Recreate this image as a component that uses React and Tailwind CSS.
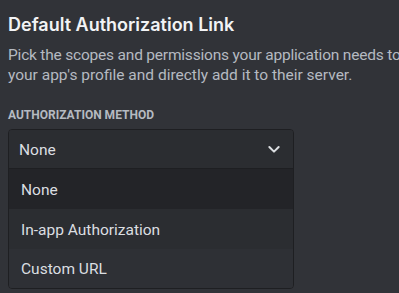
export default function App() {
  return (
    <div className="w-[399px] h-[293px] overflow-hidden bg-[#313338] pl-2 pt-[13px]" style={{ fontFamily: 'Roboto, "Noto Sans", sans-serif' }}>
      <h2 className="text-[18px] leading-[24px] font-semibold text-[#f2f3f5] whitespace-nowrap" style={{ fontFamily: 'Inter, sans-serif' }}>Default Authorization Link</h2>
      <div className="mt-[8px] text-[15.5px] leading-[20px] text-[#b5bac1] whitespace-nowrap">
        <div className="tracking-[-0.2px]">Pick the scopes and permissions your application needs to</div>
        <div>your app's profile and directly add it to their server.</div>
      </div>
      <div className="mt-[22px] text-[12px] leading-[16px] font-bold uppercase text-[#b5bac1]">Authorization Method</div>
      <div className="mt-[6px] w-[286px] rounded-[4px] border border-[#1e1f22] overflow-hidden">
        <div className="h-[38px] flex items-center justify-between bg-[#2b2d31] pl-[10px] pr-[11px]">
          <span className="pt-[3px] text-[15.5px] text-[#dbdee1]">None</span>
          <svg width="16" height="16" viewBox="0 0 24 24" fill="none"><path d="M5 9l7 7 7-7" stroke="#dbdee1" strokeWidth="3" strokeLinecap="round" strokeLinejoin="round" /></svg>
        </div>
        <div className="border-t border-[#1e1f22]">
          <div className="h-[40px] flex items-center px-[12px] pt-[3px] bg-[#232428] text-[15.5px] text-[#dbdee1]">None</div>
          <div className="h-[40px] flex items-center px-[12px] pt-[3px] bg-[#2b2d31] text-[15.5px] text-[#dbdee1]">In-app Authorization</div>
          <div className="h-[39px] flex items-center px-[12px] pt-[3px] bg-[#2e3035] text-[15.5px] text-[#dbdee1]">Custom URL</div>
        </div>
      </div>
    </div>
  );
}
